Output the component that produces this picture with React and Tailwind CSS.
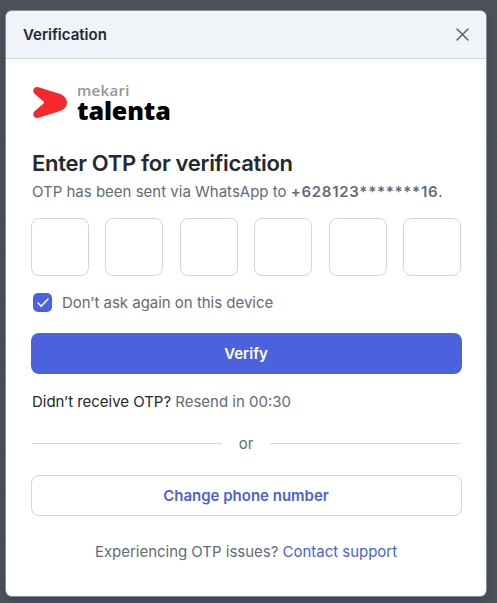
import React from "react";

const LINES = [62, 143, 216, 255, 301, 341, 362, 378, 451, 491, 537, 577, 598];

function Logo() {
  return (
    <div className="mt-[23px] flex h-[44px] items-start pl-[2px]">
      <svg className="mt-[5px]" width="34" height="31" viewBox="0 0 34 31" fill="none">
        <path
          d="M5.5.3 25 6.2C30.8 8 34 11.1 34 15.5S30.8 23 25 24.8L5.5 30.7C1.3 31.9-1.6 27.3 1.5 24.3L10.6 16.4Q11.6 15.5 10.6 14.6L1.5 6.7C-1.6 3.7 1.3-.9 5.5.3Z"
          fill="#f5292b"
        />
      </svg>
      <div className="ml-[10px] flex h-[44px] flex-col">
        <div className="h-[17px] font-['Open_Sans',sans-serif] text-[15px] leading-[16px] font-semibold tracking-[0.3px] text-[#949494]">mekari</div>
        <div className="h-[24px] font-['Open_Sans',sans-serif] text-[25px] leading-[22px] font-extrabold tracking-[-0.1px] text-black">talenta</div>
      </div>
    </div>
  );
}

export default function App() {
  return (
    <div className="relative h-[603px] w-[497px] overflow-hidden bg-[#4c515b] pt-[11px] pl-[6px] font-[Inter,sans-serif] text-[15px] text-[#626b79]">
      {LINES.map((y) => (
        <div key={y} className="absolute left-0 h-px w-full bg-[#474c56]" style={{ top: y }} />
      ))}
      <main className="relative h-[585px] w-[480px] overflow-hidden rounded-[6px] bg-white shadow-[0_0_0_1px_#858d9e,0_3px_7px_#3b404a]">
        <header className="flex h-[48px] items-center justify-between border-b border-[#d0d6e0] bg-[#f0f3f8] pr-[17px] pl-[17px]">
          <h1 className="pt-[2px] text-[15px] font-semibold text-[#232933]">Verification</h1>
          <svg width="13" height="13" viewBox="0 0 13 13" fill="none" stroke="#596275" strokeWidth="1.5" strokeLinecap="round">
            <path d="m1 1 11 11M12 1 1 12" />
          </svg>
        </header>
        <div className="px-[25px]">
          <Logo />
          <h2 className="mt-[23px] h-[28px] pl-px text-[22px] leading-[28px] font-semibold tracking-[-0.3px] whitespace-nowrap text-[#232933]">
            Enter OTP for verification
          </h2>
          <p className="mt-px h-[28px] pl-px leading-[28px] whitespace-nowrap">
            OTP has been sent via WhatsApp to <span className="font-semibold tracking-[0.7px]">+628123*******16</span>.
          </p>
          <div className="mt-[12px] flex justify-between">
            {[0, 1, 2, 3, 4, 5].map((i) => (
              <input key={i} aria-label={`Digit ${i + 1}`} className="size-[58px] rounded-[8px] border border-[#d0d6dd] bg-white" />
            ))}
          </div>
          <label className="mt-[16px] flex h-[22px] items-center pl-[2px]">
            <span className="-mt-px flex size-[19px] items-center justify-center rounded-[5px] bg-[#4b61dd]">
              <svg width="12" height="10" viewBox="0 0 12 10" fill="none" stroke="white" strokeWidth="1.5" strokeLinecap="round" strokeLinejoin="round">
                <path d="m1 5 3.2 3.3L11 1" />
              </svg>
            </span>
            <span className="ml-[10px] tracking-[-0.02px]">Don’t ask again on this device</span>
          </label>
          <button className="mt-[19px] h-[41px] w-[431px] rounded-[8px] bg-[#4b61dd] pt-px pr-px font-semibold text-white">Verify</button>
          <p className="mt-[17px] h-[22px] pl-px leading-[22px]">
            <span className="tracking-[-0.03px] text-[#232933]">Didn’t receive OTP?</span> Resend in 00:30
          </p>
          <div className="mt-[20px] flex h-[22px] items-center gap-[17px] px-px">
            <div className="-mt-px h-px flex-1 bg-[#d0d6dd]" />
            <span>or</span>
            <div className="-mt-px h-px flex-1 bg-[#d0d6dd]" />
          </div>
          <button className="mt-[20px] h-[41px] w-[431px] rounded-[8px] border border-[#d0d6dd] pt-px pr-px font-semibold text-[#4b61dd]">
            Change phone number
          </button>
          <p className="mt-[25px] text-center leading-[22px] tracking-[-0.02px]">
            Experiencing OTP issues? <a className="text-[#4b61dd]">Contact support</a>
          </p>
        </div>
      </main>
    </div>
  );
}
